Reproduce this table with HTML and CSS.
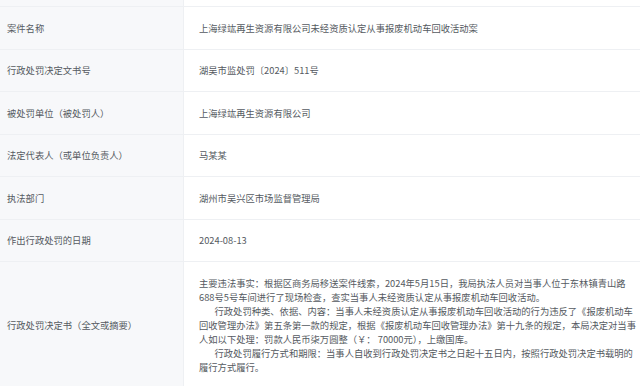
FILE: index.html
```html
<!DOCTYPE html>
<html lang="zh-CN">
<head>
<meta charset="utf-8">
<link rel="stylesheet" href="styles.css">
</head>
<body>
<div class="table">
  <div class="row top"><div class="label"></div><div class="value"></div></div>
  <div class="row"><div class="label">案件名称</div><div class="value">上海绿竑再生资源有限公司未经资质认定从事报废机动车回收活动案</div></div>
  <div class="row"><div class="label">行政处罚决定文书号</div><div class="value">湖吴市监处罚〔2024〕511号</div></div>
  <div class="row"><div class="label">被处罚单位（被处罚人）</div><div class="value">上海绿竑再生资源有限公司</div></div>
  <div class="row"><div class="label">法定代表人（或单位负责人）</div><div class="value">马某某</div></div>
  <div class="row"><div class="label">执法部门</div><div class="value">湖州市吴兴区市场监督管理局</div></div>
  <div class="row"><div class="label">作出行政处罚的日期</div><div class="value">2024-08-13</div></div>
  <div class="row last"><div class="label">行政处罚决定书（全文或摘要）</div><div class="value">
    <p>主要违法事实：根据区商务局移送案件线索，2024年5月15日，我局执法人员对当事人位于东林镇青山路<br>688号5号车间进行了现场检查，查实当事人未经资质认定从事报废机动车回收活动。</p>
    <p class="ind">行政处罚种类、依据、内容：当事人未经资质认定从事报废机动车回收活动的行为违反了《报废机动车<br>回收管理办法》第五条第一款的规定，根据《报废机动车回收管理办法》第十九条的规定，本局决定对当事<br>人如以下处理：罚款人民币柒万圆整（￥： 70000元），上缴国库。</p>
    <p class="ind">行政处罚履行方式和期限：当事人自收到行政处罚决定书之日起十五日内，按照行政处罚决定书载明的<br>履行方式履行。</p>
  </div></div>
</div>
</body>
</html>
```
FILE: styles.css
```css
html, body {
  margin: 0;
  padding: 0;
  background: #ffffff;
}
body {
  font-family: "Noto Sans CJK SC", "Noto Sans", sans-serif;
  font-size: 9.3px;
  color: #555a61;
  width: 640px;
  overflow: hidden;
}
.table {
  display: flex;
  flex-direction: column;
}
.row {
  display: grid;
  grid-template-columns: 184px 1fr;
  border-bottom: 1px solid #eef0f3;
}
.row.top {
  height: 6px;
}
.label {
  background: #f7f8fa;
  border-right: 1px solid #eef0f3;
  padding: 13.75px 0 13.75px 7px;
  line-height: 14px;
  display: flex;
  align-items: center;
  white-space: nowrap;
}
.row.top .label, .row.top .value {
  padding: 0;
}
.value {
  padding: 13.75px 0 13.75px 15px;
  line-height: 14px;
  white-space: nowrap;
}
.value p {
  margin: 0;
}
.value p.ind {
  text-indent: 15.5px;
}
.row.last {
  border-bottom: none;
}
```
